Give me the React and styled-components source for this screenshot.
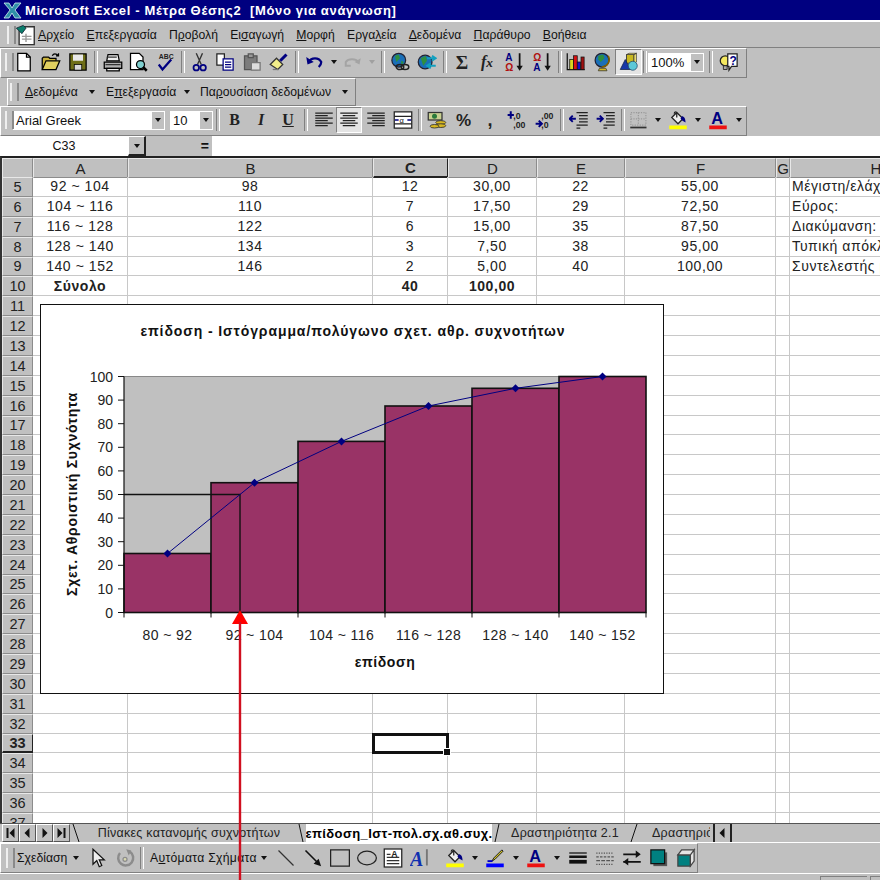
import React from "react";
import styled, { createGlobalStyle } from "styled-components";

const GlobalStyle = createGlobalStyle`
  html, body {
    margin: 0;
    padding: 0;
    background: #c0c0c0;
    overflow: hidden;
  }
  * { box-sizing: border-box; }
`;

const Window = styled.div`
  position: relative;
  width: 880px;
  height: 880px;
  overflow: hidden;
  display: flex;
  flex-direction: column;
  background: #c0c0c0;
  color: #111;
  font-family: "Liberation Sans", Arial, sans-serif;
`;

const TitleBar = styled.div`
  height: 22px;
  flex: none;
  display: flex;
  align-items: center;
  gap: 3px;
  padding-left: 3px;
  background: #000080;
  border-bottom: 2px solid #fff;
  color: #fff;
  font-size: 13px;
  font-weight: bold;
  letter-spacing: 0.66px;
  white-space: pre;
`;

const MenuBar = styled.div`
  height: 26px;
  flex: none;
  display: flex;
  align-items: center;
  padding-left: 5px;
  border-bottom: 1px solid #808080;
  font-size: 12.2px;
`;

const MenuItem = styled.span`
  margin-right: 12.2px;
  white-space: nowrap;
`;

const ToolRow = styled.div`
  height: ${(p) => p.$h}px;
  flex: none;
  display: flex;
`;

const Toolbar = styled.div`
  width: ${(p) => p.$w}px;
  margin-left: ${(p) => p.$left || 0}px;
  padding-bottom: ${(p) => p.$pb || 0}px;
  height: 100%;
  display: flex;
  align-items: center;
  font-size: 12.2px;
  border-top: 1px solid #fff;
  border-left: 1px solid #fff;
  border-right: 1px solid #808080;
  border-bottom: 1px solid #808080;
`;

const Grip = styled.span`
  flex: none;
  width: ${(p) => p.$w || 10}px;
  height: 72%;
  margin-left: ${(p) => p.$left || 4}px;
  position: relative;
  &::before {
    content: "";
    display: block;
    width: 5px;
    height: 100%;
    border-left: 2px solid #efefef;
    border-right: 2px solid #8a8a8a;
  }
`;

const Sep = styled.span`
  flex: none;
  width: ${(p) => p.$w || 9}px;
  height: 82%;
  display: flex;
  justify-content: center;
  &::before {
    content: "";
    width: 2px;
    border-left: 1px solid #808080;
    border-right: 1px solid #fff;
  }
`;

const ToolBtn = styled.span`
  flex: none;
  width: ${(p) => p.$w || 26}px;
  height: 26px;
  margin-left: ${(p) => p.$gap || 0}px;
  display: flex;
  align-items: center;
  justify-content: center;
  ${(p) =>
    p.$active &&
    `
    background: #e4e4e4;
    border-top: 1px solid #808080;
    border-left: 1px solid #808080;
    border-right: 1px solid #fff;
    border-bottom: 1px solid #fff;
  `}
`;

const Caret = styled.span`
  flex: none;
  width: 0;
  height: 0;
  border-left: 3.5px solid transparent;
  border-right: 3.5px solid transparent;
  border-top: 4px solid ${(p) => p.$color || "#111"};
`;

const TextMenu = styled.span`
  flex: none;
  width: ${(p) => p.$w}px;
  padding-left: ${(p) => p.$pad || 0}px;
  display: flex;
  align-items: center;
  justify-content: space-between;
  padding-right: 5px;
  white-space: nowrap;
  letter-spacing: ${(p) => p.$track || 0}px;
`;

const ComboBox = styled.span`
  flex: none;
  width: ${(p) => p.$w}px;
  height: 19px;
  margin-left: ${(p) => p.$left || 0}px;
  display: flex;
  align-items: center;
  justify-content: space-between;
  padding-left: 3px;
  background: #fff;
  font-size: 13px;
  white-space: nowrap;
`;

const ComboArrow = styled.span`
  flex: none;
  width: 12px;
  height: 17px;
  margin-right: 1px;
  display: flex;
  align-items: center;
  justify-content: center;
  background: #c0c0c0;
`;

const FormulaBar = styled.div`
  height: 20px;
  flex: none;
  display: flex;
  background: #fff;
  font-size: 12.5px;
`;

const NameBox = styled.div`
  width: 128px;
  display: flex;
  align-items: center;
  justify-content: center;
`;

const NameArrow = styled.div`
  width: 18px;
  display: flex;
  align-items: center;
  justify-content: center;
  background: #c0c0c0;
  border-top: 1px solid #fff;
  border-left: 1px solid #fff;
  border-right: 2px solid #222;
  border-bottom: 2px solid #222;
`;

const FormulaGap = styled.div`
  width: 66px;
  background: #c0c0c0;
  text-align: right;
  padding-right: 3px;
  font-weight: bold;
  font-size: 14px;
  line-height: 20px;
`;

const Sheet = styled.div`
  position: relative;
  flex: 1;
  min-height: 0;
  overflow: hidden;
  background: #fff;
  border-top: 2px solid #222;
  border-left: 2px solid #333;
`;

const GridRow = styled.div`
  height: ${(p) => p.$h || 19.88}px;
  display: grid;
  grid-template-columns: 31px 95px 245px 75px 89px 88px 151px 14px 172px;
`;

const ColHead = styled.div`
  display: flex;
  align-items: center;
  justify-content: center;
  background: #c0c0c0;
  font-size: 15px;
  color: #222;
  font-weight: ${(p) => (p.$on ? "bold" : "normal")};
  border-top: 1px solid #e8e8e8;
  border-left: 1px solid #e8e8e8;
  border-right: 1px solid ${(p) => (p.$on ? "#222" : "#8c8c8c")};
  border-bottom: ${(p) => (p.$on ? "2px solid #222" : "1px solid #8c8c8c")};
`;

const RowHead = styled(ColHead)`
  font-size: 14.5px;
`;

const Cell = styled.div`
  position: relative;
  display: flex;
  align-items: center;
  justify-content: ${(p) => (p.$left ? "flex-start" : "center")};
  padding-left: ${(p) => (p.$left ? "2px" : "0")};
  overflow: hidden;
  white-space: nowrap;
  font-size: 14px;
  letter-spacing: 0.55px;
  color: #222;
  font-weight: ${(p) => (p.$bold ? "bold" : "normal")};
  border-right: 1px solid #c8c8c8;
  border-bottom: 1px solid #c8c8c8;
`;

const SelectedCell = styled.div`
  position: relative;
  border: 3px solid #111;
  margin: -1px;
  z-index: 2;
  &::after {
    content: "";
    position: absolute;
    right: -5px;
    bottom: -5px;
    width: 6px;
    height: 6px;
    background: #111;
    border: 1px solid #fff;
  }
`;

const ChartFrame = styled.div`
  position: absolute;
  left: 38px;
  top: 146px;
  width: 624px;
  height: 390px;
  background: #fff;
  border: 1px solid #111;
  z-index: 1;
`;

const TabBar = styled.div`
  height: 20px;
  flex: none;
  display: flex;
  align-items: stretch;
  background: #c0c0c0;
  border-top: 1px solid #555;
  border-bottom: 1px solid #fff;
  font-size: 12.5px;
  padding-left: 2px;
  overflow: hidden;
`;

const TabNav = styled.span`
  flex: none;
  width: 17px;
  display: flex;
  align-items: center;
  justify-content: center;
  border-top: 1px solid #fff;
  border-left: 1px solid #fff;
  border-right: 1px solid #555;
  border-bottom: 1px solid #555;
`;

const Tab = styled.span`
  flex: none;
  width: ${(p) => p.$w}px;
  padding-left: ${(p) => p.$pad || 0}px;
  display: flex;
  align-items: center;
  justify-content: ${(p) => (p.$pad ? "flex-start" : "center")};
  overflow: hidden;
  white-space: nowrap;
  letter-spacing: 0.25px;
  color: #222;
  ${(p) =>
    p.$active &&
    `
    background: #fff;
    color: #000;
    font-weight: bold;
    letter-spacing: 0.4px;
    font-size: 13px;
  `}
`;

const Slant = styled.svg`
  flex: none;
  display: block;
`;

const SplitBox = styled.span`
  flex: none;
  width: 19px;
  margin-left: 3px;
  display: flex;
  align-items: center;
  justify-content: center;
  border-left: 2px solid #222;
  border-right: 2px solid #222;
`;

const StatusBar = styled.div`
  height: 7px;
  flex: none;
  display: flex;
  justify-content: flex-end;
  gap: 3px;
  border-top: 1px solid #fff;
`;

const StatusCell = styled.span`
  width: ${(p) => p.$w}px;
  height: 100%;
  margin-top: 2px;
  border-top: 1px solid #808080;
  border-left: 1px solid #808080;
`;

const PointerArrow = styled.svg`
  position: absolute;
  left: 230px;
  top: 608px;
  z-index: 5;
  pointer-events: none;
`;

/* toolbar icons: drawn on the old 16px grid and scaled up */
const Ico = ({ children, size = 20, vb = 16 }) => (
  <svg width={size} height={size} viewBox={`0 0 ${vb} ${vb}`} style={{ display: "block" }}>
    {children}
  </svg>
);

const NewIcon = () => (
  <Ico>
    <path d="M3 1h7l3 3v11H3z" fill="#fff" stroke="#000" />
    <path d="M10 1v3h3" fill="none" stroke="#000" />
  </Ico>
);
const OpenIcon = () => (
  <Ico>
    <path d="M1 14V5l1-1h4l1 1h5v2" fill="#c9b23c" stroke="#000" />
    <path d="M1 14l3-7h11l-3 7z" fill="#e0cf60" stroke="#000" />
    <path d="M9 3c1-2 3-2 5 0M14 1v2h-2" fill="none" stroke="#000" />
  </Ico>
);
const SaveIcon = () => (
  <Ico>
    <rect x="1.5" y="1.5" width="13" height="13" fill="#6e6e18" stroke="#000" />
    <rect x="4" y="2" width="8" height="5" fill="#e8e8e8" />
    <rect x="5" y="10" width="6" height="4.5" fill="#d8d8d8" stroke="#000" strokeWidth="0.6" />
  </Ico>
);
const PrintIcon = () => (
  <Ico>
    <path d="M4 2h8l1 5H3z" fill="#eee" stroke="#000" />
    <path d="M1 8h14v5H1z" fill="#b0b0b0" stroke="#000" />
    <path d="M3 13h10v2H3z" fill="#eee" stroke="#000" />
    <path d="M3 4h8M2 10h12" stroke="#333" />
  </Ico>
);
const PreviewIcon = () => (
  <Ico>
    <path d="M2 1h7l3 3v10H2z" fill="#fff" stroke="#000" />
    <circle cx="10" cy="10" r="3.2" fill="#7fd0d0" stroke="#000" />
    <path d="M12 12l3 3" stroke="#000" strokeWidth="2" />
  </Ico>
);
const SpellIcon = () => (
  <Ico>
    <text x="3" y="5.5" fontSize="5.5" fontWeight="bold" fontFamily="Liberation Sans" fill="#222">ABC</text>
    <path d="M3 10l3 4 7-8" fill="none" stroke="#000080" strokeWidth="1.8" />
  </Ico>
);
const CutIcon = () => (
  <Ico>
    <path d="M5 1l4 9M10 1L6 10" stroke="#333" strokeWidth="1.1" />
    <circle cx="5" cy="12.5" r="2.2" fill="none" stroke="#000080" strokeWidth="1.4" />
    <circle cx="10.5" cy="12.5" r="2.2" fill="none" stroke="#000080" strokeWidth="1.4" />
  </Ico>
);
const CopyIcon = () => (
  <Ico>
    <path d="M1.5 1.5h6v9h-6z" fill="#fff" stroke="#222" />
    <path d="M6.5 5.5h8v9h-8z" fill="#fff" stroke="#000080" />
    <path d="M8 8h5M8 10h5M8 12h5" stroke="#000080" />
  </Ico>
);
const PasteIcon = () => (
  <Ico>
    <path d="M2 3h10v11H2z" fill="#7c7c7c" stroke="#555" />
    <path d="M5 1.5h4v3H5z" fill="#999" stroke="#555" />
    <path d="M7.5 8.5h7v6h-7z" fill="#ddd" stroke="#777" />
  </Ico>
);
const PainterIcon = () => (
  <Ico>
    <path d="M1 10l5-5 5 5-4 4z" fill="#f2ee8a" stroke="#333" />
    <path d="M9 7l5-5" stroke="#000080" strokeWidth="2.4" />
    <path d="M3 14h5" stroke="#777" />
  </Ico>
);
const UndoIcon = () => (
  <Ico>
    <path d="M3 8c2-4 8-4 10 0 0 2-1 3-2 4" fill="none" stroke="#000080" strokeWidth="1.8" />
    <path d="M1 4l1 6 5-2z" fill="#000080" />
  </Ico>
);
const RedoIcon = () => (
  <Ico>
    <path d="M13 8c-2-3-8-3-10 0v3h4" fill="none" stroke="#a4a4a4" strokeWidth="1.6" />
    <path d="M15 5l-1 5-4-2z" fill="#a4a4a4" />
  </Ico>
);
const WebIcon = () => (
  <Ico>
    <circle cx="7" cy="6.5" r="5.5" fill="#1a6fb8" stroke="#223" />
    <path d="M4 3l3-1 1 3-3 3zM9 7l2 1-2 3z" fill="#2f8f3f" />
    <ellipse cx="8" cy="12" rx="3" ry="2" fill="none" stroke="#222" strokeWidth="1.2" />
    <ellipse cx="12" cy="12" rx="3" ry="2" fill="none" stroke="#222" strokeWidth="1.2" />
  </Ico>
);
const Web2Icon = () => (
  <Ico>
    <circle cx="6.5" cy="8" r="5.5" fill="#1a6fb8" stroke="#223" />
    <path d="M3 5l4-2 1 4-3 4z" fill="#2f8f3f" />
    <path d="M8 5h7M12 3l3 2-3 2" fill="none" stroke="#12a0c0" strokeWidth="1.5" />
    <path d="M15 11H8M11 9l-3 2 3 2" fill="none" stroke="#12a0c0" strokeWidth="1.5" />
  </Ico>
);
const GlyphBox = styled.span`
  font-family: ${(p) => (p.$serif ? '"Liberation Serif", serif' : '"Liberation Sans", sans-serif')};
  font-size: ${(p) => p.$size || 16}px;
  font-weight: ${(p) => p.$weight || "bold"};
  font-style: ${(p) => (p.$italic ? "italic" : "normal")};
  text-decoration: ${(p) => (p.$under ? "underline" : "none")};
  color: #222;
  line-height: 1;
`;
const SortIcon = ({ top, bottom, topC, bottomC }) => (
  <Ico>
    <text x="1" y="7.5" fontSize="8" fontWeight="bold" fontFamily="Liberation Sans" fill={topC}>{top}</text>
    <text x="1" y="15" fontSize="8" fontWeight="bold" fontFamily="Liberation Sans" fill={bottomC}>{bottom}</text>
    <path d="M12.5 1v11" stroke="#111" strokeWidth="1.4" />
    <path d="M10 11h5l-2.5 4z" fill="#111" />
  </Ico>
);
const ChartIcon = () => (
  <Ico>
    <path d="M1 1v13h14" fill="none" stroke="#111" />
    <rect x="3" y="6" width="3" height="8" fill="#d8d820" stroke="#111" strokeWidth="0.6" />
    <rect x="6" y="3" width="3" height="11" fill="#d81010" stroke="#111" strokeWidth="0.6" />
    <rect x="9" y="8" width="2.5" height="6" fill="#1010c8" stroke="#111" strokeWidth="0.6" />
    <rect x="12" y="4" width="2.5" height="10" fill="#a01010" stroke="#111" strokeWidth="0.6" />
  </Ico>
);
const GlobeIcon = () => (
  <Ico>
    <circle cx="8" cy="6.5" r="5.5" fill="#1a6fb8" stroke="#223" />
    <path d="M5 3l4-1 1 3-3 3-2-2z" fill="#2f8f3f" />
    <path d="M13 3c2 4 0 8-5 9" fill="none" stroke="#806000" strokeWidth="1.2" />
    <path d="M5 15h7l-1-2H6z" fill="#d8b820" stroke="#443" strokeWidth="0.7" />
  </Ico>
);
const DrawingIcon = () => (
  <Ico>
    <path d="M6 2h6v7H6z" fill="#c8b820" stroke="#333" strokeWidth="0.7" />
    <path d="M6 2l2-1h6l-2 1zM12 2l2-1v7l-2 1z" fill="#e8dc70" stroke="#333" strokeWidth="0.5" />
    <path d="M1 14l4-8 4 8z" fill="#1838a8" stroke="#124" strokeWidth="0.6" />
    <circle cx="11" cy="11" r="3.6" fill="#5cc8d8" stroke="#246" strokeWidth="0.6" />
  </Ico>
);
const HelpIcon = () => (
  <Ico>
    <circle cx="5" cy="7" r="4" fill="#f4e860" stroke="#222" />
    <path d="M3.5 11h3v3h-3z" fill="#aaa" stroke="#222" strokeWidth="0.7" />
    <path d="M7 1.5h7.5v10H10l-2 3v-3H7z" fill="#fff" stroke="#222" />
    <text x="8.3" y="10" fontSize="9.5" fontWeight="bold" fontFamily="Liberation Sans" fill="#000080">?</text>
  </Ico>
);
const LinesIcon = ({ rows }) => (
  <Ico>
    {rows.map(([a, b], i) => (
      <path key={i} d={`M${a} ${2.5 + i * 2}H${b}`} stroke="#222" strokeWidth="1" />
    ))}
  </Ico>
);
const MergeIcon = () => (
  <Ico>
    <rect x="1" y="1.5" width="14" height="13" fill="#fff" stroke="#222" />
    <path d="M1 5h14M1 11h14" stroke="#222" />
    <text x="5.2" y="10" fontSize="6" fontFamily="Liberation Sans" fill="#111">α</text>
    <path d="M1.5 8h3M14.5 8h-3" stroke="#000080" strokeWidth="1.2" />
  </Ico>
);
const CurrencyIcon = () => (
  <Ico>
    <rect x="1" y="2" width="11" height="6" fill="#c8d090" stroke="#333" />
    <circle cx="6" cy="5" r="2" fill="#2a7a3a" />
    <ellipse cx="11" cy="10" rx="4" ry="1.5" fill="#d8b820" stroke="#333" strokeWidth="0.7" />
    <ellipse cx="11" cy="12.5" rx="4" ry="1.5" fill="#d8b820" stroke="#333" strokeWidth="0.7" />
    <ellipse cx="6" cy="13" rx="3.5" ry="1.4" fill="#d8b820" stroke="#333" strokeWidth="0.7" />
  </Ico>
);
const DecimalIcon = ({ top, bottom, arrowTop }) => (
  <Ico>
    <text x="5" y="7" fontSize="7" fontFamily="Liberation Sans" fontWeight="bold" fill="#222">{top}</text>
    <text x="5" y="14.5" fontSize="7" fontFamily="Liberation Sans" fontWeight="bold" fill="#222">{bottom}</text>
    <path d={arrowTop ? "M3 1v6M.5 4h5" : "M.5 11h5M3 8.5l2.5 2.5L3 13.5"} fill="none" stroke="#000080" strokeWidth="1.6" />
  </Ico>
);
const IndentIcon = ({ flip }) => (
  <Ico>
    <path d="M6 2h9M8 4.5h7M8 7h7M8 9.5h7M6 12h9M6 14.5h3" stroke="#222" />
    {flip ? (
      <path d="M.5 7h5M3 4.5L.5 7 3 9.5" fill="none" stroke="#000080" strokeWidth="1.5" />
    ) : (
      <path d="M.5 7h5M3 4.5L5.5 7 3 9.5" fill="none" stroke="#000080" strokeWidth="1.5" />
    )}
  </Ico>
);
const BordersIcon = () => (
  <Ico>
    <path d="M1.5 2h12v10h-12zM7.5 2v10M1.5 7h12" fill="none" stroke="#999" strokeDasharray="1 1" />
    <path d="M1 14h13" stroke="#333" strokeWidth="1.4" />
  </Ico>
);
const FillIcon = () => (
  <Ico>
    <path d="M3 6l4-4 5 5-4 4z" fill="#eee" stroke="#222" />
    <path d="M5 3c0-2 2-2 2 0v3" fill="none" stroke="#222" />
    <path d="M11 5c2 0 3 2 3 5-2-1-3-2-4-3z" fill="#000080" />
    <rect x="1" y="12.4" width="14" height="3" fill="#ffff00" />
  </Ico>
);
const PenIcon = () => (
  <Ico>
    <path d="M13.5 1.5L7 8l-1.5 2.5L8 9l6.5-6.5z" fill="#d8c820" stroke="#222" strokeWidth="0.8" />
    <path d="M2 10.5h4" stroke="#0000c0" strokeWidth="1.5" />
    <rect x="1" y="12.4" width="14" height="3" fill="#0000ff" />
  </Ico>
);
const ColorAIcon = () => (
  <Ico>
    <text x="2.6" y="11.4" fontSize="13" fontWeight="bold" fontFamily="Liberation Sans" fill="#000080">A</text>
    <rect x="1" y="12.4" width="14" height="3" fill="#ee1111" />
  </Ico>
);
const CursorIcon = () => (
  <Ico>
    <path d="M4 1v12l3-3 2 5 2-1-2-4.5h4z" fill="#eee" stroke="#111" />
  </Ico>
);
const RotateIcon = () => (
  <Ico>
    <path d="M4 4a6 6 0 1 0 8-1" fill="none" stroke="#8c8c8c" strokeWidth="2" />
    <path d="M9 1l4 1-2 4z" fill="#8c8c8c" />
    <circle cx="8" cy="9" r="1.6" fill="#d8d8b0" stroke="#8c8c8c" />
  </Ico>
);
const LineIcon = () => (
  <Ico>
    <path d="M2 2l12 12" stroke="#333" />
  </Ico>
);
const ArrowLineIcon = () => (
  <Ico>
    <path d="M2 2l10 10" stroke="#111" strokeWidth="1.3" />
    <path d="M14.5 14.5l-6-2 4-4z" fill="#111" />
  </Ico>
);
const RectIcon = () => (
  <Ico>
    <rect x="0.5" y="1.5" width="15" height="13" fill="none" stroke="#222" />
  </Ico>
);
const OvalIcon = () => (
  <Ico>
    <ellipse cx="8" cy="8" rx="7.5" ry="5.5" fill="none" stroke="#222" />
  </Ico>
);
const TextBoxIcon = () => (
  <Ico>
    <rect x="1" y="0.8" width="14" height="14.4" fill="#fff" stroke="#222" />
    <text x="6.6" y="7" fontSize="7" fontWeight="bold" fontFamily="Liberation Sans" fill="#222">A</text>
    <path d="M3 5h3M3 7.5h10M3 10h10M3 12.5h10" stroke="#333" />
  </Ico>
);
const WordArtIcon = () => (
  <Ico>
    <text x="0" y="14" fontSize="16" fontStyle="italic" fontWeight="bold" fontFamily="Liberation Serif" fill="#1030b0">A</text>
    <path d="M13.5 1v13" stroke="#777" strokeWidth="1.5" />
  </Ico>
);
const LineStyleIcon = () => (
  <Ico>
    <path d="M1 4h14" stroke="#111" strokeWidth="1" />
    <path d="M1 7h14" stroke="#111" strokeWidth="2" />
    <path d="M1 11h14" stroke="#111" strokeWidth="3" />
  </Ico>
);
const DashIcon = () => (
  <Ico>
    <path d="M1 4h14" stroke="#555" strokeDasharray="1 1" />
    <path d="M1 7h14" stroke="#555" strokeDasharray="2 1" />
    <path d="M1 10h14" stroke="#555" strokeDasharray="3 1" />
    <path d="M1 13h14" stroke="#555" strokeDasharray="1 1" />
  </Ico>
);
const ArrowsIcon = () => (
  <Ico>
    <path d="M1 5h12M1 11h14" stroke="#111" strokeWidth="1.4" />
    <path d="M15 5l-4-3v6zM1 11l4-3v6z" fill="#111" />
  </Ico>
);
const ShadowIcon = () => (
  <Ico>
    <rect x="3.5" y="3.5" width="11" height="11" fill="#555" />
    <rect x="1.5" y="1.5" width="11" height="11" fill="#008080" stroke="#111" />
  </Ico>
);
const ThreeDIcon = () => (
  <Ico>
    <path d="M1.5 5.5h10v9h-10z" fill="#008080" stroke="#444" />
    <path d="M1.5 5.5l3-4h10l-3 4zM11.5 5.5l3-4v9l-3 4z" fill="#e4e4e4" stroke="#444" />
  </Ico>
);
const ExcelLogo = () => (
  <svg width="19" height="17" viewBox="0 0 19 17" style={{ display: "block" }}>
    <path d="M1 1h5l3 5 3-5h6l-6 7 6 8h-6l-3-5-3 5H1l6-8z" fill="#2f8fa8" stroke="#d0f0f0" strokeWidth="0.8" />
  </svg>
);
const SheetMenuIcon = () => (
  <Ico size={22}>
    <path d="M5 2h9v13H3V5z" fill="#fff" stroke="#333" />
    <path d="M5 9h7M5 11h7M8 7v6" stroke="#999" />
    <path d="M1 3l5-2 2 2-3 4z" fill="#0c7f6c" stroke="#123" strokeWidth="0.6" />
  </Ico>
);

const Label = ({ a = "", u, b = "" }) => (
  <>
    {a}
    <u>{u}</u>
    {b}
  </>
);

const menus = [
  ["", "Α", "ρχείο"],
  ["", "Ε", "πεξεργασία"],
  ["Π", "ρ", "οβολή"],
  ["Ει", "σ", "αγωγή"],
  ["", "Μ", "ορφή"],
  ["Εργα", "λ", "εία"],
  ["", "Δ", "εδομένα"],
  ["", "Π", "αράθυρο"],
  ["", "Β", "οήθεια"],
];

const colHeads = ["", "A", "B", "C", "D", "E", "F", "G", "H"];

const sheetRows = {
  5: ["92 ~ 104", "98", "12", "30,00", "22", "55,00", "", "Μέγιστη/ελάχιστη τιμή:"],
  6: ["104 ~ 116", "110", "7", "17,50", "29", "72,50", "", "Εύρος:"],
  7: ["116 ~ 128", "122", "6", "15,00", "35", "87,50", "", "Διακύμανση:"],
  8: ["128 ~ 140", "134", "3", "7,50", "38", "95,00", "", "Τυπική απόκλιση:"],
  9: ["140 ~ 152", "146", "2", "5,00", "40", "100,00", "", "Συντελεστής μεταβολής"],
  10: ["Σύνολο", "", "40", "100,00", "", "", "", ""],
};

const rowNumbers = Array.from({ length: 33 }, (_, i) => i + 5);

/* chart coordinates are relative to the frame */
const plot = { left: 83, right: 605, top: 71.5, bottom: 307.5 };
const binW = (plot.right - plot.left) / 6;
const yOf = (v) => plot.bottom - ((plot.bottom - plot.top) * v) / 100;
const bins = [
  ["80 ~ 92", 25],
  ["92 ~ 104", 55],
  ["104 ~ 116", 72.5],
  ["116 ~ 128", 87.5],
  ["128 ~ 140", 95],
  ["140 ~ 152", 100],
];
const points = bins.map(([, v], i) => [plot.left + binW * (i + 0.5), yOf(v)]);

function Chart() {
  const ticks = [0, 10, 20, 30, 40, 50, 60, 70, 80, 90, 100];
  const font = "Liberation Sans";
  return (
    <ChartFrame>
      <svg width="622" height="388" style={{ display: "block" }}>
        <text x="312" y="31" textAnchor="middle" fontFamily={font} fontSize="14" fontWeight="bold" letterSpacing="0.9" fill="#111">
          επίδοση - Ιστόγραμμα/πολύγωνο σχετ. αθρ. συχνοτήτων
        </text>
        <rect x={plot.left} y={plot.top} width={plot.right - plot.left} height={plot.bottom - plot.top} fill="#c0c0c0" />
        <path d={`M${plot.left} ${plot.top}H${plot.right}`} stroke="#888" />
        {bins.map(([, v], i) => (
          <rect key={i} x={plot.left + binW * i} y={yOf(v)} width={binW} height={plot.bottom - yOf(v)} fill="#993366" stroke="#111" strokeWidth="1.6" />
        ))}
        <path d={`M${plot.left} ${yOf(50)}H199V${plot.bottom}`} fill="none" stroke="#111" strokeWidth="1.4" />
        <polyline points={points.map((p) => p.join(",")).join(" ")} fill="none" stroke="#000080" strokeWidth="1" />
        {points.map(([x, y], i) => (
          <path key={i} d={`M${x - 4} ${y}L${x} ${y - 4}L${x + 4} ${y}L${x} ${y + 4}z`} fill="#000080" />
        ))}
        <path d={`M${plot.left} ${plot.top}V${plot.bottom}H${plot.right}`} fill="none" stroke="#111" strokeWidth="1.2" />
        {ticks.map((t) => (
          <g key={t}>
            <path d={`M${plot.left - 6} ${yOf(t)}H${plot.left}`} stroke="#111" />
            <text x={plot.left - 11} y={yOf(t) + 5} textAnchor="end" fontFamily={font} fontSize="14" fill="#222">
              {t}
            </text>
          </g>
        ))}
        {bins.map(([label], i) => (
          <g key={label}>
            <path d={`M${plot.left + binW * i} ${plot.bottom}v5`} stroke="#111" />
            <text x={plot.left + binW * (i + 0.5)} y="335" textAnchor="middle" fontFamily={font} fontSize="14" letterSpacing="0.4" fill="#222">
              {label}
            </text>
          </g>
        ))}
        <path d={`M${plot.right} ${plot.bottom}v5`} stroke="#111" />
        <text x="344" y="362" textAnchor="middle" fontFamily={font} fontSize="14" fontWeight="bold" letterSpacing="0.6" fill="#111">
          επίδοση
        </text>
        <text transform="translate(36 189) rotate(-90)" textAnchor="middle" fontFamily={font} fontSize="14" fontWeight="bold" letterSpacing="0.72" fill="#111">
          Σχετ. Αθροιστική Συχνότητα
        </text>
      </svg>
    </ChartFrame>
  );
}

function TriIcon({ dir }) {
  const d = dir === "l" ? "M6.5 0v10L1.5 5z" : "M2.5 0v10l5-5z";
  return (
    <svg width="9" height="10" viewBox="0 0 9 10" style={{ display: "block" }}>
      <path d={d} fill="#111" />
    </svg>
  );
}

function BarEndIcon({ dir }) {
  const d = dir === "l" ? "M0.5 0h2v10h-2zM8.5 0v10L3.5 5z" : "M0.5 0v10l5-5zM6.5 0h2v10h-2z";
  return (
    <svg width="9" height="10" viewBox="0 0 9 10" style={{ display: "block" }}>
      <path d={d} fill="#111" />
    </svg>
  );
}

function SlantMark({ w, flip }) {
  return (
    <Slant width={w} height="18" viewBox={`0 0 ${w} 18`}>
      <path d={flip ? `M${w - 3} 0L${3} 18` : `M3 0L${w - 3} 18`} stroke="#111" strokeWidth="1" />
    </Slant>
  );
}

export default function App() {
  return (
    <Window>
      <GlobalStyle />
      <TitleBar>
        <ExcelLogo />
        <span>{"Microsoft Excel - Μέτρα Θέσης2  [Μόνο για ανάγνωση]"}</span>
      </TitleBar>

      <MenuBar>
        <Grip $w={7} $left={2} />
        <ToolBtn $w={24}>
          <SheetMenuIcon />
        </ToolBtn>
        {menus.map(([a, u, b]) => (
          <MenuItem key={a + u + b}>
            <Label a={a} u={u} b={b} />
          </MenuItem>
        ))}
      </MenuBar>

      <ToolRow $h={30}>
        <Toolbar $w={747} $pb={2}>
          <Grip $left={4} $w={6} />
          <ToolBtn><NewIcon /></ToolBtn>
          <ToolBtn $w={27}><OpenIcon /></ToolBtn>
          <ToolBtn $w={27}><SaveIcon /></ToolBtn>
          <Sep />
          <ToolBtn $w={25}><PrintIcon /></ToolBtn>
          <ToolBtn><PreviewIcon /></ToolBtn>
          <ToolBtn $w={27}><SpellIcon /></ToolBtn>
          <Sep />
          <ToolBtn $w={25}><CutIcon /></ToolBtn>
          <ToolBtn><CopyIcon /></ToolBtn>
          <ToolBtn $w={27}><PasteIcon /></ToolBtn>
          <ToolBtn $w={27}><PainterIcon /></ToolBtn>
          <Sep $w={10} />
          <ToolBtn $w={25}><UndoIcon /></ToolBtn>
          <ToolBtn $w={13}><Caret /></ToolBtn>
          <ToolBtn $w={24}><RedoIcon /></ToolBtn>
          <ToolBtn $w={16}><Caret $color="#a0a0a0" /></ToolBtn>
          <Sep $w={6} />
          <ToolBtn $w={27}><WebIcon /></ToolBtn>
          <ToolBtn $w={27}><Web2Icon /></ToolBtn>
          <Sep $w={10} />
          <ToolBtn $w={24}><GlyphBox $size={19} $serif>Σ</GlyphBox></ToolBtn>
          <ToolBtn><GlyphBox $size={16} $serif $italic>f<small>x</small></GlyphBox></ToolBtn>
          <ToolBtn $w={28}><SortIcon top="A" bottom="Ω" topC="#000080" bottomC="#b01010" /></ToolBtn>
          <ToolBtn $w={27}><SortIcon top="Ω" bottom="A" topC="#b01010" bottomC="#000080" /></ToolBtn>
          <Sep />
          <ToolBtn $w={24}><ChartIcon /></ToolBtn>
          <ToolBtn $w={27}><GlobeIcon /></ToolBtn>
          <ToolBtn $w={27} $active><DrawingIcon /></ToolBtn>
          <Sep $w={6} />
          <ComboBox $w={56}>
            100%
            <ComboArrow><Caret /></ComboArrow>
          </ComboBox>
          <Sep $w={13} />
          <ToolBtn $w={24}><HelpIcon /></ToolBtn>
        </Toolbar>
      </ToolRow>

      <ToolRow $h={28}>
        <Toolbar $w={349} $left={7}>
          <Grip $left={2} $w={9} />
          <TextMenu $w={81} $pad={6}>
            <span><Label u="Δ" b="εδομένα" /></span>
            <Caret />
          </TextMenu>
          <TextMenu $w={95} $pad={6}>
            <span><Label a="Ε" u="π" b="εξεργασία" /></span>
            <Caret />
          </TextMenu>
          <TextMenu $w={158} $pad={5}>
            <span><Label a="Πα" u="ρ" b="ουσίαση δεδομένων" /></span>
            <Caret />
          </TextMenu>
        </Toolbar>
      </ToolRow>

      <ToolRow $h={30}>
        <Toolbar $w={747} $pb={2}>
          <Grip $left={4} $w={6} />
          <ComboBox $w={152} $left={2}>
            Arial Greek
            <ComboArrow><Caret /></ComboArrow>
          </ComboBox>
          <ComboBox $w={43} $left={5}>
            10
            <ComboArrow><Caret /></ComboArrow>
          </ComboBox>
          <Sep />
          <ToolBtn $w={25}><GlyphBox $serif>B</GlyphBox></ToolBtn>
          <ToolBtn $w={28}><GlyphBox $serif $italic>I</GlyphBox></ToolBtn>
          <ToolBtn><GlyphBox $serif $under>U</GlyphBox></ToolBtn>
          <Sep $w={10} />
          <ToolBtn $w={25}><LinesIcon rows={[[1, 15], [1, 11], [1, 15], [1, 11], [1, 15], [1, 11]]} /></ToolBtn>
          <ToolBtn $active><LinesIcon rows={[[1, 15], [3, 13], [1, 15], [3, 13], [1, 15], [3, 13]]} /></ToolBtn>
          <ToolBtn $w={27}><LinesIcon rows={[[1, 15], [5, 15], [1, 15], [5, 15], [1, 15], [5, 15]]} /></ToolBtn>
          <ToolBtn $w={27}><MergeIcon /></ToolBtn>
          <Sep $w={8} />
          <ToolBtn><CurrencyIcon /></ToolBtn>
          <ToolBtn $w={27}><GlyphBox $size={17}>%</GlyphBox></ToolBtn>
          <ToolBtn><GlyphBox $size={18}>,</GlyphBox></ToolBtn>
          <ToolBtn $w={28}><DecimalIcon top=",0" bottom=",00" arrowTop /></ToolBtn>
          <ToolBtn $w={27}><DecimalIcon top=",00" bottom=",0" /></ToolBtn>
          <Sep $w={8} />
          <ToolBtn><IndentIcon flip /></ToolBtn>
          <ToolBtn $w={27}><IndentIcon /></ToolBtn>
          <Sep $w={8} />
          <ToolBtn $w={24}><BordersIcon /></ToolBtn>
          <ToolBtn $w={14}><Caret /></ToolBtn>
          <ToolBtn><FillIcon /></ToolBtn>
          <ToolBtn $w={13}><Caret /></ToolBtn>
          <ToolBtn $w={28}><ColorAIcon /></ToolBtn>
          <ToolBtn $w={13}><Caret /></ToolBtn>
        </Toolbar>
      </ToolRow>

      <FormulaBar>
        <NameBox>C33</NameBox>
        <NameArrow><Caret /></NameArrow>
        <FormulaGap>=</FormulaGap>
      </FormulaBar>

      <Sheet>
        <GridRow $h={19}>
          {colHeads.map((c) => (
            <ColHead key={c || "corner"} $on={c === "C"}>{c}</ColHead>
          ))}
        </GridRow>
        {rowNumbers.map((n) => {
          const data = sheetRows[n] || ["", "", "", "", "", "", "", ""];
          return (
            <GridRow key={n}>
              <RowHead $on={n === 33}>{n}</RowHead>
              {data.map((v, i) =>
                n === 33 && i === 2 ? (
                  <SelectedCell key={i} />
                ) : (
                  <Cell key={i} $left={i === 7} $bold={n === 10}>{v}</Cell>
                )
              )}
            </GridRow>
          );
        })}
        <Chart />
      </Sheet>

      <TabBar>
        <TabNav><BarEndIcon dir="l" /></TabNav>
        <TabNav><TriIcon dir="l" /></TabNav>
        <TabNav><TriIcon dir="r" /></TabNav>
        <TabNav><BarEndIcon dir="r" /></TabNav>
        <SlantMark w={12} />
        <Tab $w={214}>Πίνακες κατανομής συχνοτήτων</Tab>
        <SlantMark w={10} />
        <Tab $w={186} $active>επίδοση_Ιστ-πολ.σχ.αθ.συχ.</Tab>
        <SlantMark w={10} flip />
        <Tab $w={126}>Δραστηριότητα 2.1</Tab>
        <SlantMark w={12} flip />
        <Tab $w={70} $pad={12}>Δραστηριότητα</Tab>
        <SplitBox><TriIcon dir="l" /></SplitBox>
      </TabBar>

      <ToolRow $h={30}>
        <Toolbar $w={698}>
          <Grip $left={5} $w={8} />
          <TextMenu $w={70} $pad={3}>
            <span>Σ<u>χ</u>εδίαση</span>
            <Caret />
          </TextMenu>
          <ToolBtn $w={28}><CursorIcon /></ToolBtn>
          <ToolBtn $w={26}><RotateIcon /></ToolBtn>
          <Sep $w={7} />
          <TextMenu $w={127} $pad={5} $track={0.3}>
            <span>Α<u>υ</u>τόματα Σχήματα</span>
            <Caret />
          </TextMenu>
          <ToolBtn $w={27}><LineIcon /></ToolBtn>
          <ToolBtn $w={27}><ArrowLineIcon /></ToolBtn>
          <ToolBtn $w={27}><RectIcon /></ToolBtn>
          <ToolBtn $w={27}><OvalIcon /></ToolBtn>
          <ToolBtn $w={26}><TextBoxIcon /></ToolBtn>
          <ToolBtn $w={27}><WordArtIcon /></ToolBtn>
          <ToolBtn $w={27} $gap={8}><FillIcon /></ToolBtn>
          <ToolBtn $w={13}><Caret /></ToolBtn>
          <ToolBtn $w={28}><PenIcon /></ToolBtn>
          <ToolBtn $w={13}><Caret /></ToolBtn>
          <ToolBtn $w={28}><ColorAIcon /></ToolBtn>
          <ToolBtn $w={14}><Caret /></ToolBtn>
          <ToolBtn $w={27}><LineStyleIcon /></ToolBtn>
          <ToolBtn $w={27}><DashIcon /></ToolBtn>
          <ToolBtn $w={27}><ArrowsIcon /></ToolBtn>
          <ToolBtn $w={27}><ShadowIcon /></ToolBtn>
          <ToolBtn $w={27}><ThreeDIcon /></ToolBtn>
        </Toolbar>
      </ToolRow>

      <StatusBar>
        <StatusCell $w={47} />
        <StatusCell $w={10} />
      </StatusBar>

      <PointerArrow width="20" height="272" viewBox="0 0 20 272">
        <path d="M10 2L18 16H2z" fill="#ff0000" />
        <path d="M10 14V272" stroke="#d01020" strokeWidth="2.4" />
      </PointerArrow>
    </Window>
  );
}
